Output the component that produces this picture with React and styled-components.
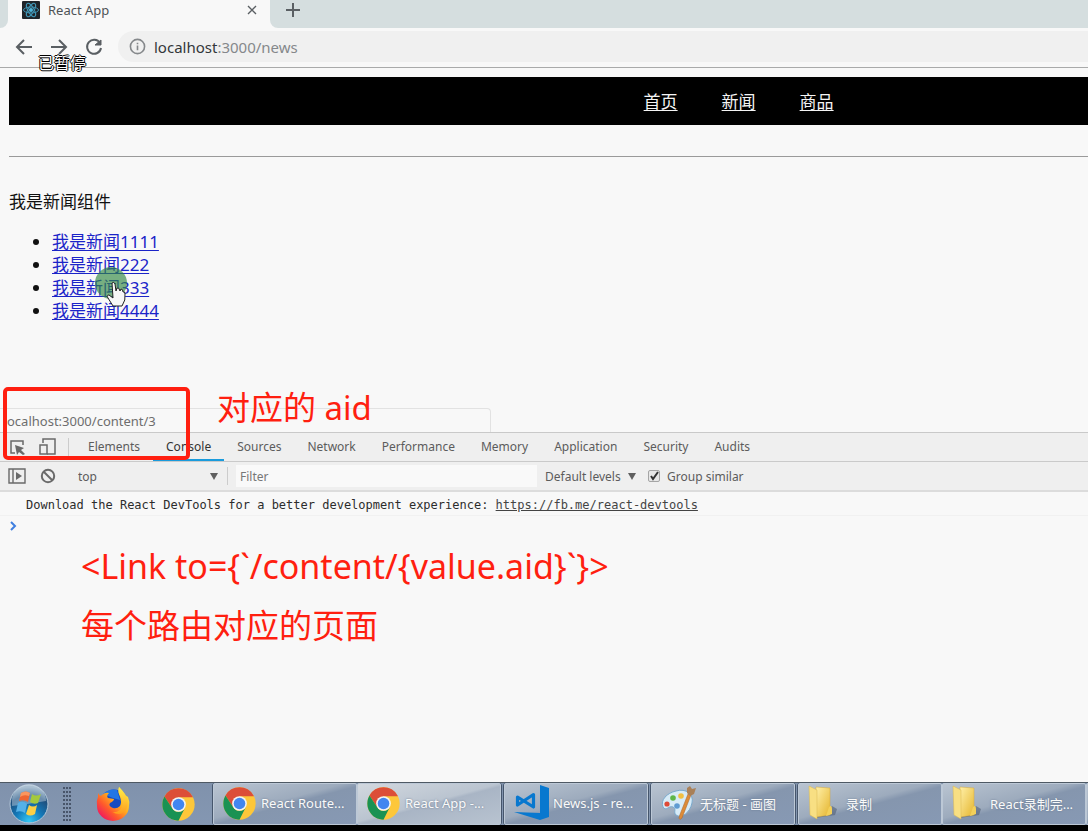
import React from "react";
import styled, { createGlobalStyle, css } from "styled-components";

const ui = `"Noto Sans", "Noto Sans CJK SC", sans-serif`;

const GlobalStyle = createGlobalStyle`
  *, *::before, *::after { box-sizing: border-box; }
  body { margin: 0; background: #f8f8f8; font-family: ${ui}; overflow: hidden; }
  button, input, select { font: inherit; color: inherit; margin: 0; padding: 0; border: 0; background: none; border-radius: 0; }
  svg { display: block; flex: none; }
`;

const Screen = styled.div`
  position: relative;
  display: flex;
  flex-direction: column;
  min-height: 100vh;
  overflow: hidden;
`;

/* ---------- browser chrome ---------- */
const TabStrip = styled.div`
  display: flex;
  height: 28px;
  background: #f8f8f8;
`;
const StripStart = styled.div`
  width: 8px;
  background: #d5dedf;
  border-bottom-right-radius: 8px;
`;
const BrowserTab = styled.div`
  display: flex;
  align-items: flex-start;
  gap: 8px;
  width: 262px;
  padding: 1px 12px 0 14px;
  font-size: 13px;
  line-height: 18px;
  color: #4d5256;
`;
const TabTitle = styled.span`
  flex: 1;
`;
const StripRest = styled.div`
  flex: 1;
  padding: 1px 0 0 14px;
  background: #d5dedf;
  border-bottom-left-radius: 8px;
`;
const IconButton = styled.button`
  display: grid;
  place-items: center;
  width: ${(p) => p.$w || 18}px;
  height: 18px;
  color: ${(p) => p.$color || "#5a5f63"};
`;
const AddressRow = styled.div`
  display: flex;
  align-items: center;
  gap: 17px;
  height: 40px;
  padding: 0 0 2px 15px;
  border-bottom: 1px solid #a9aaaa;
`;
const AddressBar = styled.div`
  flex: 1;
  display: flex;
  align-items: center;
  gap: 8px;
  height: 31px;
  margin-left: -2px;
  padding-left: 11px;
  background: #f0f0f0;
  border-radius: 16px 0 0 16px;
  font-size: 15px;
  color: #85888b;
`;
const Host = styled.span`
  color: #33373a;
`;

/* ---------- web page ---------- */
const Page = styled.main`
  flex: none;
  padding: 9px 0 0 9px;
  font-size: 17px;
  line-height: 23px;
  color: #111;
`;
const SiteHeader = styled.header`
  display: flex;
  align-items: center;
  gap: 44px;
  height: 48px;
  padding-left: calc(59% - 2px);
  background: #000;
`;
const NavLink = styled.a`
  color: #f4f4f4;
  text-underline-offset: 2px;
`;
const Rule = styled.hr`
  margin: 31px 0 33px;
  border: 0;
  border-top: 1px solid #9a9a9a;
`;
const Heading = styled.p`
  margin: 0 0 17px;
`;
const NewsList = styled.ul`
  margin: 0;
  padding: 0 0 0 43px;
`;
const NewsLink = styled.a`
  color: #1b24c8;
  text-underline-offset: 2px;
`;
const StatusBubble = styled.div`
  width: calc(45% + 5px);
  height: 24px;
  margin: 86px 0 0 -9px;
  padding-left: 7px;
  border: 1px solid #e2e2e2;
  border-width: 1px 1px 0 0;
  border-top-right-radius: 4px;
  font-size: 13px;
  line-height: 24px;
  color: #6e6e6e;
`;

/* ---------- devtools ---------- */
const DevTools = styled.section`
  flex: 1;
  display: flex;
  flex-direction: column;
  border-top: 1px solid #c9c9c9;
  font-size: 12px;
  color: #5c5c5c;
`;
const ToolRow = styled.div`
  display: flex;
  align-items: ${(p) => (p.$stretch ? "stretch" : "center")};
  height: ${(p) => (p.$stretch ? 29 : 30)}px;
  background: #efefef;
  border-bottom: ${(p) => (p.$stretch ? "1px solid #cacaca" : "2px solid #dcdcdc")};
`;
const ToolIcons = styled.div`
  display: flex;
  align-items: center;
  gap: ${(p) => p.$gap || 12}px;
  width: 69px;
  padding-left: 8px;
`;
const Divider = styled.span`
  align-self: center;
  width: 1px;
  height: 18px;
  margin-left: ${(p) => p.$ml || 0}px;
  background: #cccccc;
`;
const PanelTabs = styled.div`
  display: flex;
  padding-left: 6px;
`;
const PanelTab = styled.button`
  padding: 0 13px;
  border-bottom: 2px solid transparent;
  ${(p) =>
    p.$active &&
    css`
      color: #333;
      border-bottom-color: #1a9bdc;
    `}
`;
const SelectBox = styled.label`
  display: flex;
  align-items: center;
  width: ${(p) => p.$w}px;
  margin-left: ${(p) => p.$ml}px;
`;
const Select = styled.select`
  flex: 1;
  min-width: 0;
  appearance: none;
  outline: none;
`;
const FilterInput = styled.input`
  flex: 0 1 301px;
  height: 22px;
  margin-left: 8px;
  padding-left: 4px;
  background: #f9f9f9;
  &::placeholder { color: #777; opacity: 1; }
`;
const CheckLabel = styled.label`
  display: flex;
  align-items: center;
  gap: 7px;
  margin-left: 12px;
`;
const CheckWrap = styled.span`
  position: relative;
  display: block;
  width: 12px;
  height: 12px;
`;
const Checkbox = styled.input`
  display: block;
  appearance: none;
  width: 12px;
  height: 12px;
  border: 1px solid #a5a5a5;
  border-radius: 2px;
  background: #e7e7e7;
`;
const CheckMark = styled.svg`
  position: absolute;
  inset: 0;
  pointer-events: none;
`;
const Message = styled.div`
  padding: 3px 0 0 26px;
  border-bottom: 1px solid #f1f1f1;
  font: 12px/20px "DejaVu Sans Mono", monospace;
  color: #2c2c2c;
  white-space: pre;
  overflow: hidden;
`;
const MessageLink = styled.a`
  color: #444;
`;
const Prompt = styled.div`
  flex: 1;
  padding: 5px 0 0 9px;
`;

/* ---------- taskbar ---------- */
const Taskbar = styled.footer`
  display: flex;
  height: 49px;
  background: linear-gradient(#8092ac, #8497b2);
  border-top: 1px solid #4e5964;
  border-bottom: 6px solid #000;
  overflow: hidden;
`;
const QuickLaunch = styled.div`
  flex: none;
  display: flex;
  align-items: center;
  width: 212px;
  padding-left: 9px;
`;
const Launcher = styled.button`
  margin-left: ${(p) => p.$ml || 0}px;
`;
const TaskGroup = styled.div`
  flex: none;
  display: flex;
  margin-right: 1px;
  border: 1px solid #46566c;
  border-width: 0 1px;
  border-radius: 3px;
`;
const TaskButton = styled.button`
  display: flex;
  align-items: center;
  gap: ${(p) => p.$gap || 5}px;
  width: 144px;
  padding: 0 0 2px 9px;
  border: 1px solid #bcc8d6;
  border-radius: 2px;
  background: ${(p) =>
    p.$active
      ? "linear-gradient(165deg, #d2d8df 0%, #bac4d0 48%, #a9b5c5 52%, #b8c3d0 100%)"
      : "linear-gradient(165deg, #b9c4d1 0%, #9dabbd 44%, #8596ae 52%, #8799b4 100%)"};
  font-size: 13px;
  color: #fafafa;
  text-shadow: 0 0 2px #66768c;
  white-space: nowrap;
  text-align: left;
`;

/* ---------- marks drawn over the screen ---------- */
const Note = styled.p`
  position: absolute;
  left: ${(p) => p.$x}px;
  top: ${(p) => p.$y}px;
  margin: 0;
  font-size: ${(p) => p.$size || 33}px;
  line-height: 48px;
  color: #ff1f10;
  white-space: pre;
`;
const Highlight = styled.div`
  position: absolute;
  left: 3px;
  top: 387px;
  width: 187px;
  height: 73px;
  border: 4px solid #ff1f10;
  border-radius: 5px;
`;
const Paused = styled.div`
  position: absolute;
  left: 38px;
  top: 50px;
  font: 16px/24px "Noto Sans CJK SC", sans-serif;
  color: #fff;
  text-shadow: 1px 0 #000, -1px 0 #000, 0 1px #000, 0 -1px #000;
`;
const Pointer = styled.svg`
  position: absolute;
  left: 94px;
  top: 266px;
`;

/* ---------- icons ---------- */
const Stroke = ({ s = 18, d, w = 2, children }) => (
  <svg width={s} height={s} viewBox="0 0 18 18" fill="none" stroke="currentColor" strokeWidth={w}>
    {d && <path d={d} />}
    {children}
  </svg>
);

const ReactIcon = () => (
  <svg width="18" height="18" viewBox="0 0 18 18">
    <rect width="18" height="18" rx="1" fill="#1f2429" />
    <g fill="none" stroke="#3f94b4" strokeWidth="1">
      <ellipse cx="9" cy="9" rx="7.5" ry="3" />
      <ellipse cx="9" cy="9" rx="7.5" ry="3" transform="rotate(60 9 9)" />
      <ellipse cx="9" cy="9" rx="7.5" ry="3" transform="rotate(120 9 9)" />
    </g>
    <circle cx="9" cy="9" r="2" fill="#4fb4d8" />
  </svg>
);

const ChromeIcon = () => (
  <svg width="33" height="33" viewBox="0 0 48 48">
    <circle cx="24" cy="24" r="23.5" fill="#fdc73a" />
    <path d="M3.6 12.3A23.5 23.5 0 0 1 44.4 12.3L45 13.5H24L14.9 29.3z" fill="#dc4e38" />
    <path d="M3.6 12.3A23.5 23.5 0 0 0 24 47.5L33.1 29.3A10.5 10.5 0 0 1 14.9 29.3z" fill="#1a9253" />
    <circle cx="24" cy="24" r="10.7" fill="#f3f3f3" />
    <circle cx="24" cy="24" r="8.4" fill="#4286f0" />
  </svg>
);

const FirefoxIcon = () => (
  <svg width="34" height="36" viewBox="0 0 34 36">
    <defs>
      <linearGradient id="fox" x1="0.9" y1="0.1" x2="0.15" y2="0.9">
        <stop offset="0" stopColor="#ffe83c" />
        <stop offset="0.4" stopColor="#ffb01f" />
        <stop offset="0.7" stopColor="#ff5b2b" />
        <stop offset="1" stopColor="#f0195f" />
      </linearGradient>
      <linearGradient id="foxTail" x1="0" y1="0" x2="0" y2="1">
        <stop offset="0" stopColor="#fff04a" />
        <stop offset="1" stopColor="#ff9a1c" />
      </linearGradient>
    </defs>
    <circle cx="18" cy="16" r="12.5" fill="#164bc0" />
    <path d="M7 8Q13 2 21 4L24 14 17 12z" fill="#2376e5" />
    <path d="M2 7Q4 11 6 9Q9 6 13 7Q10 10 12 12L18 13Q18 15 14 17Q12 20 17 22Q21 23 24 20Q26 16 24 11Q22 5 23 1Q27 5 29 9L32 11Q34 16 33 20A16 15 0 0 1 1 20Q0 15 2 11z" fill="url(#fox)" />
    <path d="M23 1Q21 7 25 11Q29 19 24 24Q20 27 16 26Q25 31 30 24Q34 16 29 8Q26 4 23 1z" fill="url(#foxTail)" />
  </svg>
);

const WindowsIcon = () => (
  <svg width="40" height="40" viewBox="0 0 40 40">
    <defs>
      <radialGradient id="orb" cx="0.5" cy="0.95" r="0.9">
        <stop offset="0" stopColor="#35c8f5" />
        <stop offset="0.4" stopColor="#1379b9" />
        <stop offset="0.75" stopColor="#1f4f7d" />
        <stop offset="1" stopColor="#8ba6bd" />
      </radialGradient>
    </defs>
    <circle cx="20" cy="20" r="19" fill="url(#orb)" stroke="#b3c7d8" />
    <path d="M3 17A17 17 0 0 1 37 17Q20 20 3 22z" fill="#dce9f2" opacity="0.4" />
    <path d="M12 9Q17 6 21 9L19 18Q15 15 10 17z" fill="#ee6632" />
    <path d="M23 10Q27 13 32 10L29 19Q25 21 21 18z" fill="#a4c93e" />
    <path d="M9 19Q14 16 18 20L16 29Q12 26 7 28z" fill="#55b1e8" />
    <path d="M20 21Q24 24 28 21L26 30Q21 33 17 30z" fill="#fbcf45" />
    <path d="M12 9Q17 6 21 9L20 12Q15 10 11 13z" fill="#ffab70" opacity="0.7" />
  </svg>
);

const Grip = () => (
  <svg width="9" height="34" viewBox="0 0 9 34" fill="#48556a">
    {Array.from({ length: 9 }, (_, r) =>
      [0, 3, 6].map((x) => <rect key={`${r}-${x}`} x={x} y={r * 4} width="2" height="2" />)
    )}
  </svg>
);

const CodeIcon = () => (
  <svg width="36" height="36" viewBox="0 0 36 36" fill="#0878cf">
    <path d="M26 0L35 3V32L26 35L0 27L26 28z" />
    <path d="M3.500 12L19.500 22V9.500L3.500 20z" fill="none" stroke="#0878cf" strokeWidth="3.2" strokeLinejoin="round" />
  </svg>
);

const PaintIcon = () => (
  <svg width="36" height="36" viewBox="0 0 36 36">
    <path d="M15 6C25 3 33 9 31 18C29 28 20 34 15 30C12 27 16 24 12 22C8 20 5 27 2 22C-1 15 6 8 15 6z" fill="#d7ebf7" stroke="#79a9cd" />
    <circle cx="6" cy="19" r="2.6" fill="#de4a37" />
    <circle cx="12" cy="13" r="2.8" fill="#5eb64a" />
    <circle cx="20" cy="11" r="2.8" fill="#f1bf42" />
    <circle cx="16" cy="21" r="2.8" fill="#5f9bd2" />
    <path d="M27 9L30 10L21 33Q18 36 18 32z" fill="#dc8b38" stroke="#a9652a" strokeWidth="0.5" />
    <path d="M26 3L29 1L31 4L35 3L33 9L29 11L26 8z" fill="#a98058" />
  </svg>
);

const FolderIcon = () => (
  <svg width="30" height="36" viewBox="0 0 30 36">
    <defs>
      <linearGradient id="folder" x1="0" y1="0" x2="1" y2="1">
        <stop offset="0" stopColor="#fff0a8" />
        <stop offset="1" stopColor="#e5b52e" />
      </linearGradient>
    </defs>
    <path d="M8 33L27 30L29 24L24 21z" fill="#536176" opacity="0.6" />
    <path d="M8 2L22 3V30L8 32z" fill="url(#folder)" stroke="#d4ab40" strokeWidth="0.5" />
    <path d="M1 1L9 5V34L2 30z" fill="#f8df83" stroke="#d9b650" strokeWidth="0.5" />
    <path d="M21 22Q24 19 24 24V29L18 31z" fill="#f3d05a" />
  </svg>
);

const Triangle = () => (
  <svg width="8" height="7" viewBox="0 0 8 7"><path d="M0 0H8L4 7z" fill="#5f5f5f" /></svg>
);

const news = ["我是新闻1111", "我是新闻222", "我是新闻333", "我是新闻4444"];
const panels = ["Elements", "Console", "Sources", "Network", "Performance", "Memory", "Application", "Security", "Audits"];

export default function App() {
  return (
    <Screen>
      <GlobalStyle />
      <TabStrip>
        <StripStart />
        <BrowserTab>
          <ReactIcon />
          <TabTitle>React App</TabTitle>
          <IconButton $w={12} aria-label="Close tab"><Stroke s={12} d="M3 3L15 15M15 3L3 15" w={2} /></IconButton>
        </BrowserTab>
        <StripRest>
          <IconButton aria-label="New tab"><Stroke d="M9 2V16M2 9H16" /></IconButton>
        </StripRest>
      </TabStrip>
      <AddressRow>
        <IconButton aria-label="Back"><Stroke d="M17 9H2M9 2L2 9L9 16" /></IconButton>
        <IconButton aria-label="Forward"><Stroke d="M1 9H16M9 2L16 9L9 16" /></IconButton>
        <IconButton aria-label="Reload">
          <Stroke d="M15 5A7 7 0 1 0 16 10"><path d="M16 2V7H10z" fill="currentColor" strokeWidth="1" /></Stroke>
        </IconButton>
        <AddressBar>
          <Stroke s={17} w={1.7}>
            <circle cx="9" cy="9" r="7.5" />
            <path d="M9 8V13M9 5V6.700" />
          </Stroke>
          <span><Host>localhost</Host>:3000/news</span>
        </AddressBar>
      </AddressRow>

      <Page>
        <SiteHeader>
          <NavLink href="#home">首页</NavLink>
          <NavLink href="#news">新闻</NavLink>
          <NavLink href="#goods">商品</NavLink>
        </SiteHeader>
        <Rule />
        <Heading>我是新闻组件</Heading>
        <NewsList>
          {news.map((n, i) => (
            <li key={n}><NewsLink href={`#content-${i + 1}`}>{n}</NewsLink></li>
          ))}
        </NewsList>
        <StatusBubble>ocalhost:3000/content/3</StatusBubble>
      </Page>

      <DevTools>
        <ToolRow $stretch>
          <ToolIcons>
            <IconButton aria-label="Inspect element" $color="#6a6a6a">
              <Stroke w={1.5}>
                <path d="M7 15H3V3H15V7" />
                <path d="M7 7L16 10L13 12L17 16L15 17L11 14L9 17z" fill="currentColor" stroke="none" />
              </Stroke>
            </IconButton>
            <IconButton aria-label="Device toolbar" $color="#6a6a6a">
              <Stroke w={1.5}>
                <path d="M5 5V1H17V16H9" />
                <rect x="2" y="7" width="7" height="9" />
              </Stroke>
            </IconButton>
            <Divider />
          </ToolIcons>
          <PanelTabs>
            {panels.map((p) => <PanelTab key={p} $active={p === "Console"}>{p}</PanelTab>)}
          </PanelTabs>
        </ToolRow>
        <ToolRow>
          <ToolIcons $gap={13}>
            <IconButton aria-label="Show console sidebar" $color="#6a6a6a">
              <Stroke w={1.4}>
                <path d="M1 2H17V16H1zM5 2V16" />
                <path d="M8 5L14 9L8 13z" fill="currentColor" stroke="none" />
              </Stroke>
            </IconButton>
            <IconButton aria-label="Clear console" $color="#6a6a6a">
              <Stroke><circle cx="9" cy="9" r="6.2" /><path d="M4.500 4.500L13.500 13.500" /></Stroke>
            </IconButton>
            <Divider $ml={-1} />
          </ToolIcons>
          <SelectBox $w={140} $ml={9}>
            <Select aria-label="Context"><option>top</option></Select>
            <Triangle />
          </SelectBox>
          <Divider $ml={9} />
          <FilterInput aria-label="Filter" placeholder="Filter" />
          <SelectBox $w={91} $ml={8}>
            <Select aria-label="Log levels"><option>Default levels</option></Select>
            <Triangle />
          </SelectBox>
          <CheckLabel>
            <CheckWrap>
              <Checkbox type="checkbox" defaultChecked />
              <CheckMark width="12" height="12" viewBox="0 0 12 12"><path d="M3 6L5 9L10 2" fill="none" stroke="#333" strokeWidth="2" /></CheckMark>
            </CheckWrap>
            Group similar
          </CheckLabel>
        </ToolRow>
        <Message>
          {"Download the React DevTools for a better development experience: "}
          <MessageLink href="#devtools">https://fb.me/react-devtools</MessageLink>
        </Message>
        <Prompt>
          <svg width="8" height="10" viewBox="0 0 8 10"><path d="M2 1L6 5L2 9" fill="none" stroke="#3f7fe0" strokeWidth="2" /></svg>
        </Prompt>
      </DevTools>

      <Taskbar>
        <QuickLaunch>
          <Launcher aria-label="Start"><WindowsIcon /></Launcher>
          <Launcher as="span" $ml={14}><Grip /></Launcher>
          <Launcher $ml={24} aria-label="Firefox"><FirefoxIcon /></Launcher>
          <Launcher $ml={32} aria-label="Chrome"><ChromeIcon /></Launcher>
        </QuickLaunch>
        <TaskGroup>
          <TaskButton><ChromeIcon />React Route...</TaskButton>
          <TaskButton $active><ChromeIcon />React App -...</TaskButton>
        </TaskGroup>
        <TaskGroup><TaskButton $gap={3}><CodeIcon />News.js - re...</TaskButton></TaskGroup>
        <TaskGroup><TaskButton $gap={3}><PaintIcon />无标题 - 画图</TaskButton></TaskGroup>
        <TaskGroup>
          <TaskButton $gap={8}><FolderIcon />录制</TaskButton>
          <TaskButton $gap={8}><FolderIcon />React录制完...</TaskButton>
          <TaskButton aria-label="More windows" />
        </TaskGroup>
      </Taskbar>

      <Paused>已暂停</Paused>
      <Pointer width="36" height="42" viewBox="0 0 36 42">
        <circle cx="17" cy="17" r="16" fill="#2f8741" opacity="0.65" />
        <path d="M18 17Q20 15 21 18L22 25L23 22Q25 21 26 25L27 23Q29 23 29 26Q31 25 31 28Q32 34 28 40H19L14 32Q12 29 15 29L19 32z" fill="#f7f7f7" stroke="#222" />
      </Pointer>
      <Highlight />
      <Note $x={217} $y={384}>对应的 aid</Note>
      <Note $x={81} $y={542} $size={34}>{"<Link to={`/content/{value.aid}`}>"}</Note>
      <Note $x={81} $y={602}>每个路由对应的页面</Note>
    </Screen>
  );
}
